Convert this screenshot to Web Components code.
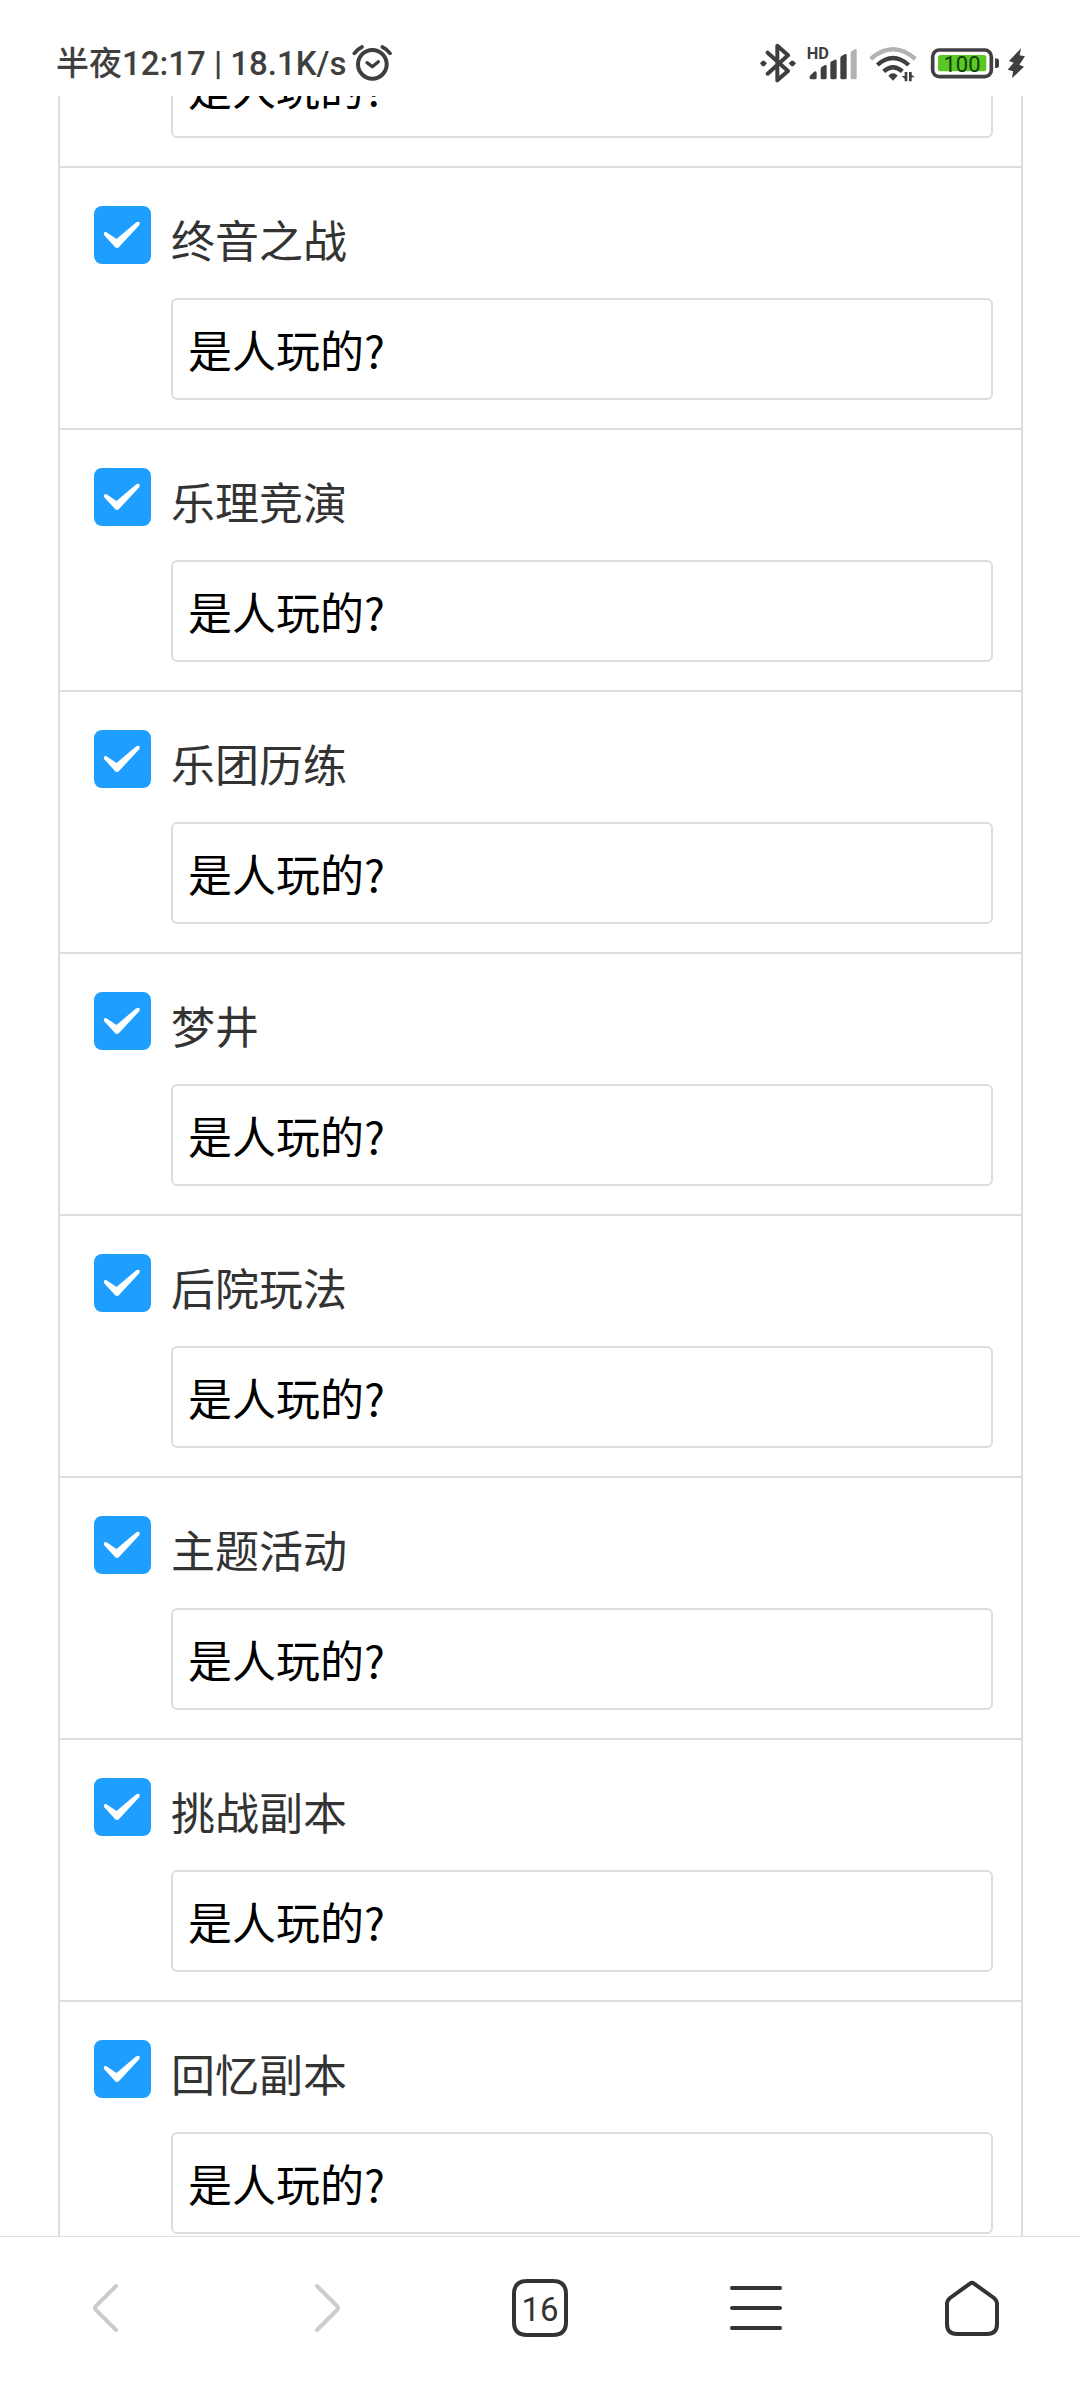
<!DOCTYPE html>
<html lang="zh-CN">
<head>
<meta charset="utf-8">
<meta name="viewport" content="width=device-width">
<title>主题活动</title>
<style>
  body { margin: 0; background: #fff; font-family: Roboto, "Noto Sans CJK SC", sans-serif; }
</style>
</head>
<body>
<phone-screen>
  <status-bar slot="top">半夜12:17 | 18.1K/s</status-bar>
  <survey-row></survey-row>
  <survey-row>终音之战</survey-row>
  <survey-row>乐理竞演</survey-row>
  <survey-row>乐团历练</survey-row>
  <survey-row>梦井</survey-row>
  <survey-row>后院玩法</survey-row>
  <survey-row>主题活动</survey-row>
  <survey-row>挑战副本</survey-row>
  <survey-row>回忆副本</survey-row>
  <browser-nav slot="bottom">16</browser-nav>
</phone-screen>

<template id="screen-tpl">
  <style>
    :host { display: flex; flex-direction: column; height: 100vh; overflow: hidden; }
    main { flex: 1; min-height: 0; overflow-y: auto; scrollbar-width: none; }
    .list { margin: 0 57px 0 58px; border: solid #ddd; border-width: 0 2px; }
  </style>
  <slot name="top"></slot>
  <main><div class="list"><slot></slot></div></main>
  <slot name="bottom"></slot>
</template>

<template id="row-tpl">
  <style>
    :host { display: block; box-sizing: border-box; height: 262px; border-top: 2px solid #ddd;
      padding: 38px 28px 28px 34px; font-family: "Noto Sans CJK SC", sans-serif; }
    .head { display: flex; gap: 20px; height: 92px; }
    .box { display: grid; width: 57px; height: 58px; }
    .box > * { grid-area: 1 / 1; }
    .box svg { pointer-events: none; }
    input[type=checkbox] { appearance: none; margin: 0; border: 2px solid #ddd; border-radius: 8px; background: #fff; }
    input[type=checkbox]:checked { border-color: #1e9fff; background: #1e9fff; }
    label { font-size: 44px; line-height: 66px; color: #333; }
    input[type=text] { display: block; box-sizing: border-box; width: calc(100% - 77px); height: 102px; margin: 0 0 0 77px;
      padding: 0 15px; border: 2px solid #ddd; border-radius: 6px; background: #fff;
      font-family: inherit; font-size: 44px; color: #000; outline: none; }
  </style>
  <div class="head">
    <span class="box">
      <input type="checkbox" id="on" checked>
      <svg viewBox="0 0 57 58" width="57" height="58"><path fill="#fff" d="M12.5 26.2L22.5 33L42 16.5Q44.500 14.800 45.700 16.500Q46 18 45 19.500L25 41Q23 43 21 41L10 29Q9 25.500 12.500 26.200Z"/></svg>
    </span>
    <label for="on"><slot></slot></label>
  </div>
  <input type="text" value="是人玩的?" aria-labelledby="on">
</template>

<template id="status-tpl">
  <style>
    :host { display: flex; justify-content: space-between; box-sizing: border-box; height: 96px; flex: none;
      padding: 30px 54px 0 56px; color: #3f3f3f; font-size: 33px; font-weight: 500; background: #fff; }
    div { display: flex; align-items: center; white-space: nowrap; }
    .time { gap: 6px; }
    .time span { padding-bottom: 4px; }
    svg { display: block; height: 40px; }
  </style>
  <div class="time"><span><slot></slot></span>
    <svg viewBox="940 68 120 120" width="40" fill="none" stroke="#3f3f3f" stroke-width="12" stroke-linecap="round">
      <circle cx="1001" cy="132" r="43"/><path d="M947 99Q957 86 970 80M1054 99Q1044 86 1031 80" stroke-width="11"/><path d="M985 127L1001 139L1019 124" stroke-width="10" stroke-linejoin="round"/>
    </svg>
  </div>
  <div>
    <svg viewBox="60 68 138 120" width="46"><path d="M83 97L144 152L112 180V76L144 105L83 160" fill="none" stroke="#3f3f3f" stroke-width="12" stroke-linejoin="round" stroke-linecap="round"/><path d="M60 129L67 121H73L81 129L73 138H67ZM146 129L154 121H160L168 129L160 138H154Z" fill="#3f3f3f"/></svg>
    <svg viewBox="198 68 189 120" width="63" fill="#3f3f3f"><text x="200" y="117" font-size="49" font-weight="700">HD</text>
      <path d="M209 168L222 154Q230 150 230 158V172Q230 177 225 177H214Q209 177 209 172ZM242 146Q242 141 246 139L255 134Q260 133 260 138V172Q260 177 255 177H247Q242 177 242 172ZM271 129Q271 125 275 123L285 118Q290 117 290 122V172Q290 177 285 177H276Q271 177 271 172ZM301 113Q301 109 305 107L315 101Q320 100 320 105V172Q320 177 315 177H306Q301 177 301 172Z"/><path fill="#b2b2b2" d="M332 98Q332 94 336 92L345 86Q350 85 350 90V172Q350 177 345 177H337Q332 177 332 172Z"/></svg>
    <svg viewBox="387 68 183 120" width="61" fill="none" stroke="#3f3f3f" stroke-width="13"><path stroke="#b2b2b2" d="M392 116Q459 58 526 116"/><path d="M412 134Q459 92 506 134"/><path d="M431 153Q459 128 487 153"/><path fill="#3f3f3f" stroke="none" d="M445 166Q459 152 473 166L459 181Z"/><path fill="#3f3f3f" stroke="none" d="M502 155V183H494V175L485 167H494V155ZM507 183V155H515V163L525 171H515V183Z"/></svg>
    <svg viewBox="570 68 231 120" width="77"><rect x="578" y="89" width="176" height="80" rx="20" fill="#fff" stroke="#433e43" stroke-width="11"/><rect x="594" y="104" width="145" height="49" rx="8" fill="#5ac725"/><path d="M765 114Q777 114 777 120V137Q777 143 765 143Z" fill="#433e43"/><text x="666" y="154" text-anchor="middle" font-size="66" font-weight="400" fill="#12400a">100</text></svg>
    <svg viewBox="801 68 57 120" width="19"><path fill="#3f3f3f" d="M843 84L807 122L821 127L803 148L819 153L816 174L852 139L838 133L855 108L839 105Z"/></svg>
  </div>
</template>

<template id="nav-tpl">
  <style>
    :host { display: block; flex: none; background: #fff; border-top: 1px solid #e0e0e0; }
    nav { display: grid; grid-template-columns: repeat(5, 1fr); height: 141px; padding-bottom: 22px; }
    button { display: grid; place-items: center; padding: 0; border: 0; background: none; font: 400 33px Roboto, sans-serif; color: #333; }
    button > * { grid-area: 1 / 1; }
    span { padding-top: 3px; }
    svg { fill: none; stroke: #333; stroke-width: 4; stroke-linecap: round; stroke-linejoin: round; }
    button:disabled svg { stroke: #ccc; }
  </style>
  <nav>
    <button disabled aria-label="后退"><svg viewBox="0 0 60 60" width="60" height="60"><path d="M38 8L18 28Q16 30 18 32L38 52"/></svg></button>
    <button disabled aria-label="前进"><svg viewBox="0 0 60 60" width="60" height="60"><path d="M23 8L43 28Q45 30 43 32L23 52"/></svg></button>
    <button><svg viewBox="0 0 60 60" width="60" height="60"><path d="M17 3H43Q56 3 56 16V44Q56 57 43 57H17Q4 57 4 44V16Q4 3 17 3Z"/></svg><span><slot></slot></span></button>
    <button aria-label="菜单"><svg viewBox="0 0 60 60" width="60" height="60"><path d="M6 10H54M6 30H54M6 50H54"/></svg></button>
    <button aria-label="主页"><svg viewBox="0 0 60 60" width="60" height="60"><path d="M28 5.600Q30 4 32 5.600L52 20Q55 22.500 55 26V46Q55 56 45 56H15Q5 56 5 46V26Q5 22.500 8 20Z"/></svg></button>
  </nav>
</template>

<script>
  class Templated extends HTMLElement {
    constructor() {
      super();
      const tpl = document.getElementById(this.constructor.template);
      this.attachShadow({ mode: 'open' }).append(tpl.content.cloneNode(true));
    }
  }
  class StatusBar extends Templated { static template = 'status-tpl'; }
  class BrowserNav extends Templated { static template = 'nav-tpl'; }
  class SurveyRow extends Templated { static template = 'row-tpl'; }
  class PhoneScreen extends Templated {
    static template = 'screen-tpl';
    connectedCallback() { this.shadowRoot.querySelector('main').scrollTop = 192; }
  }
  customElements.define('status-bar', StatusBar);
  customElements.define('browser-nav', BrowserNav);
  customElements.define('survey-row', SurveyRow);
  customElements.define('phone-screen', PhoneScreen);
</script>
</body>
</html>
